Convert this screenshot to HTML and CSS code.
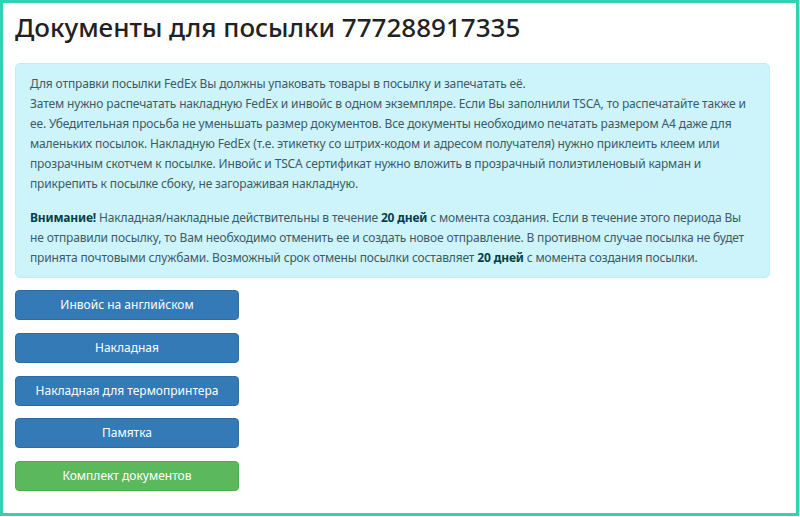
FILE: index.html
```html
<!DOCTYPE html>
<html lang="ru">
<head>
<meta charset="utf-8">
<title>Документы для посылки</title>
<link rel="stylesheet" href="styles.css">
</head>
<body>
<div class="frame">
  <h1 class="title">Документы для посылки 777288917335</h1>
  <div class="alert">
    <p>Для отправки посылки FedEx Вы должны упаковать товары в посылку и запечатать её.<br>
    Затем нужно распечатать накладную FedEx и инвойс в одном экземпляре. Если Вы заполнили TSCA, то распечатайте также и ее. Убедительная просьба не уменьшать размер документов. Все документы необходимо печатать размером А4 даже для маленьких посылок. Накладную FedEx (т.е. этикетку со штрих-кодом и адресом получателя) нужно приклеить клеем или прозрачным скотчем к посылке. Инвойс и TSCA сертификат нужно вложить в прозрачный полиэтиленовый карман и прикрепить к посылке сбоку, не загораживая накладную.</p>
    <p><strong>Внимание!</strong> Накладная/накладные действительны в течение <strong>20 дней</strong> с момента создания. Если в течение этого периода Вы не отправили посылку, то Вам необходимо отменить ее и создать новое отправление. В противном случае посылка не будет принята почтовыми службами. Возможный срок отмены посылки составляет <strong>20 дней</strong> с момента создания посылки.</p>
  </div>
  <div class="buttons">
    <a class="btn btn-primary">Инвойс на английском</a>
    <a class="btn btn-primary">Накладная</a>
    <a class="btn btn-primary">Накладная для термопринтера</a>
    <a class="btn btn-primary">Памятка</a>
    <a class="btn btn-success">Комплект документов</a>
  </div>
</div>
</body>
</html>
```
FILE: styles.css
```css
html, body {
  margin: 0;
  padding: 0;
  background: #ffffff;
}
body {
  width: 800px;
  height: 517px;
  overflow: hidden;
  font-family: "Noto Sans", "Open Sans", sans-serif;
}
.frame {
  box-sizing: border-box;
  width: 799px;
  height: 516px;
  border: 3px solid #2fd3b3;
  padding: 8px 12px 0 12px;
}
.title {
  margin: 0;
  font-size: 26px;
  font-weight: 500;
  line-height: 32px;
  color: #222;
}
.alert {
  margin-top: 20px;
  width: 755px;
  box-sizing: border-box;
  background: #cdf3fb;
  border: 1px solid #bdeef8;
  border-radius: 5px;
  padding: 10px 14px 9px 14px;
  color: #3d5b64;
  font-size: 12px;
  letter-spacing: -0.15px;
  line-height: 20px;
}
.alert p {
  margin: 0;
}
.alert p + p {
  margin-top: 14px;
}
.alert strong {
  color: #073f48;
  font-weight: 700;
}
.buttons {
  margin-top: 12px;
  display: flex;
  flex-direction: column;
  gap: 12.75px;
}
.btn {
  display: block;
  box-sizing: border-box;
  width: 224px;
  height: 30px;
  border-radius: 4px;
  color: #fff;
  font-size: 12px;
  line-height: 28px;
  text-align: center;
}
.btn-primary {
  background: #337ab7;
  border: 1px solid #2e6da4;
}
.btn-success {
  background: #5cb85c;
  border: 1px solid #4cae4c;
}
```
